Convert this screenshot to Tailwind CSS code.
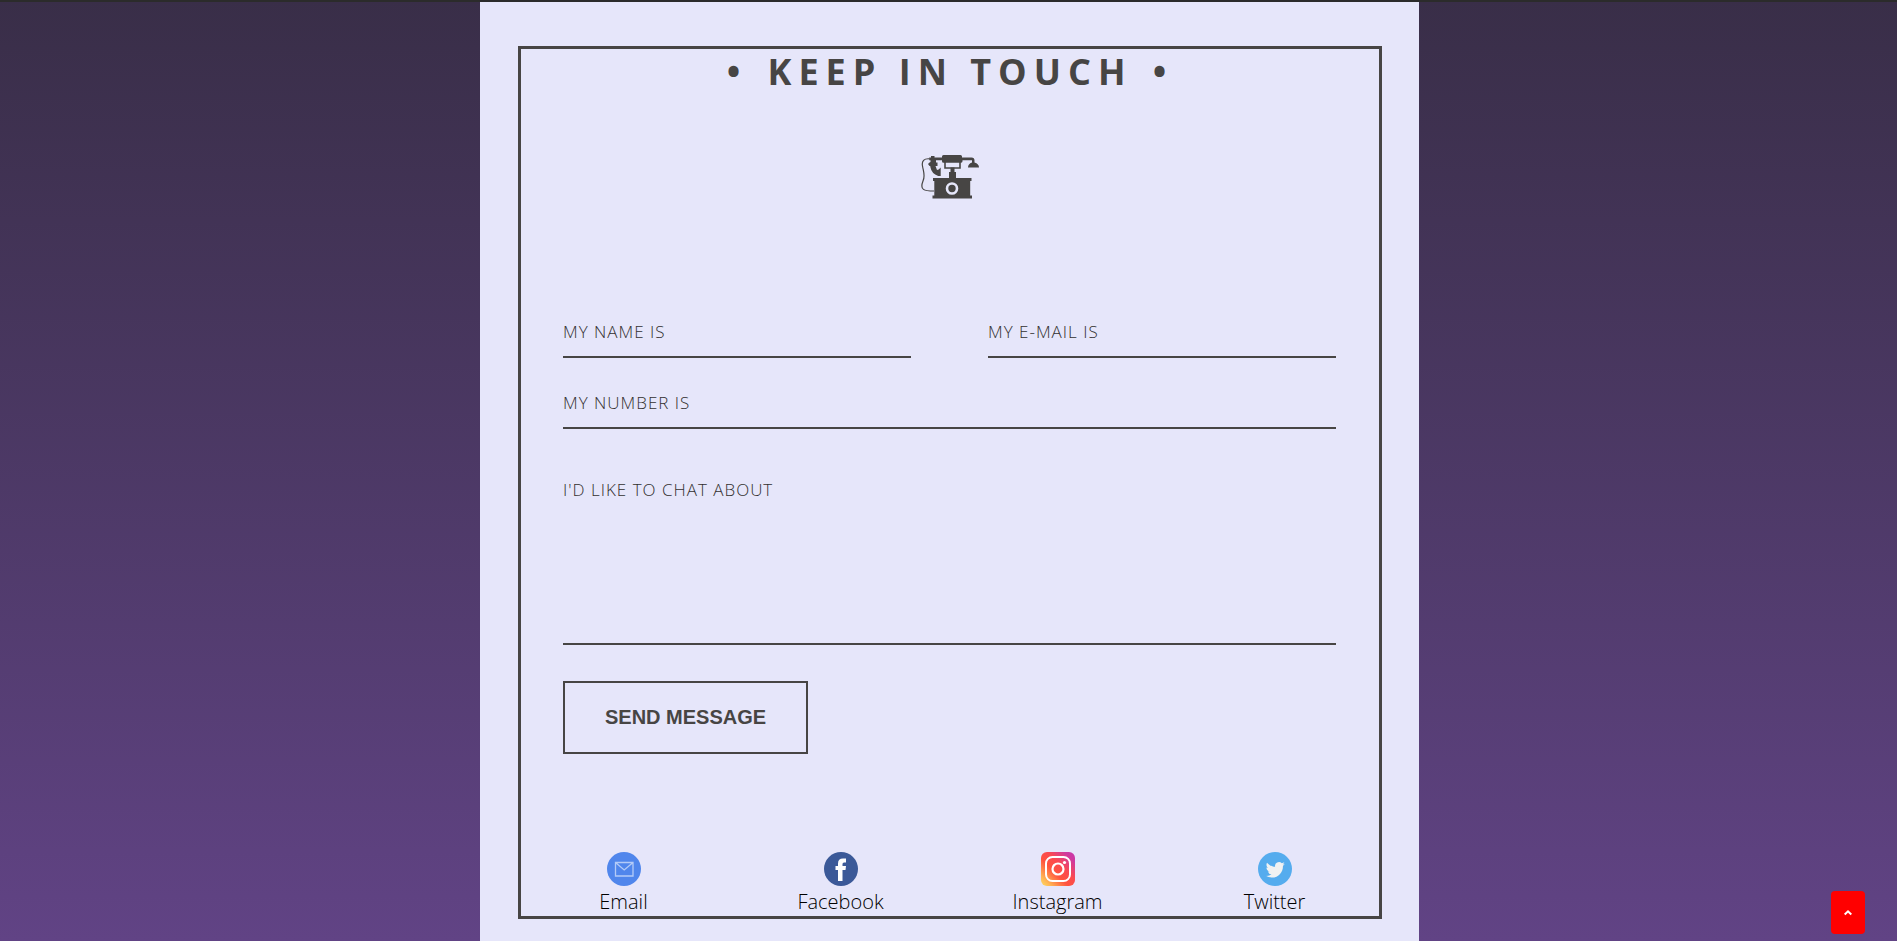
<!DOCTYPE html>
<html lang="en">
<head>
<meta charset="utf-8">
<meta name="viewport" content="width=device-width, initial-scale=1">
<title>Keep in touch</title>
<script src="https://cdn.jsdelivr.net/npm/@tailwindcss/browser@4"></script>
</head>
<body class="min-h-screen border-t-2 border-[#2b2b2b] bg-linear-to-b from-[#392e48] to-[#614385] pl-0.5 font-['Open_Sans','Noto_Sans',sans-serif] text-[#474544] flex flex-col">
<main class="mx-auto w-full max-w-[939px] grow bg-[#e6e6fa] pt-11 pb-5 pl-[38px] pr-[37px]">
  <section class="border-3 border-[#474544]">
    <h1 class="text-center text-4xl leading-[46px] font-bold tracking-[7px]"><span class="mr-1">•</span> KEEP IN TOUCH <span class="ml-1">•</span></h1>
    <svg class="mx-auto mt-[60px] block h-11 w-[60px]" viewBox="0 0 60 44" fill="#474544" aria-hidden="true">
      <path d="M9.500 3.800C4 3.300 1.500 6 2.500 11C3.500 17 5.500 21 3 26C-.5 35 4 36 14 36" fill="none" stroke="#474544" stroke-width="1.200"/>
      <path d="M11 1h3.500v1.500H22V1.500Q22 0 23.500 0h17Q42 0 42 1.500v1h9.500q3 0 3 3v2q4.500 1.300 4.500 5H48q0-3.700 4-5V5.200H42.500v1q0 1.500-2 1.500h-17Q22 7.700 22 6.200v-1h-6v2.300h1.500V11H15.500l1.500 4q1.500 0 3.700-2.500v8.500h-2.500Q11.500 18.500 10.500 12.500L10.200 11H9.500L8 9l1.500-1.500L10.500 7V5.200H9.200V2.500H11z"/>
      <path d="M25 7v6h15V7" fill="none" stroke="#474544" stroke-width="1.600"/>
      <path d="M30.500 12.500h4V17h1.500v6H51.500v3h-1.300v14.500H52V43.500H12.500v-3h1.800V26H13v-3h16v-6h1.500z"/>
      <circle cx="32" cy="33.500" r="5" fill="#474544" stroke="#e6e6fa" stroke-width="2.600"/>
    </svg>
    <form class="mt-[105px] mr-[43px] ml-[42px]">
      <div class="grid grid-cols-2 gap-x-[77px] gap-y-[17px]">
        <input type="text" aria-label="My name is" placeholder="MY NAME IS" class="h-[54px] min-w-0 border-b-2 border-[#474544] bg-transparent pt-0.5 text-[17px] leading-6 font-light tracking-[1px] outline-none placeholder:text-[#33302f]">
        <input type="email" aria-label="My e-mail is" placeholder="MY E-MAIL IS" class="h-[54px] min-w-0 border-b-2 border-[#474544] bg-transparent pt-0.5 text-[17px] leading-6 font-light tracking-[1px] outline-none placeholder:text-[#33302f]">
        <input type="tel" aria-label="My number is" placeholder="MY NUMBER IS" class="col-span-2 h-[54px] min-w-0 border-b-2 border-[#474544] bg-transparent pt-0.5 text-[17px] leading-6 font-light tracking-[1px] outline-none placeholder:text-[#33302f]">
        <textarea aria-label="I'd like to chat about" placeholder="I'D LIKE TO CHAT ABOUT" class="col-span-2 block h-[199px] resize-none border-b-2 border-[#474544] bg-transparent pt-8 text-[17px] leading-6 font-light tracking-[1px] outline-none placeholder:text-[#33302f]"></textarea>
      </div>
      <button type="submit" class="mt-9 block h-[73px] border-2 border-[#474544] px-10 pb-0.5 font-['Liberation_Sans',Arial,sans-serif] text-xl font-bold">SEND MESSAGE</button>
    </form>
    <nav aria-label="Social links" class="-mr-1 -ml-1.5 mt-[98px] grid grid-cols-4 text-xl leading-8 font-light text-black">
      <a href="#email" class="-mb-0.5 flex flex-col items-center">
        <svg class="size-[34px]" viewBox="0 0 34 34" aria-hidden="true"><circle cx="17" cy="17" r="17" fill="#5086ec"/><path d="M8.500 10.500h17.500v13.500H8.500zL17.200 18L26 10.500" fill="none" stroke="#b4cbf7" stroke-width="1.300"/></svg>
        Email</a>
      <a href="#facebook" class="-mb-0.5 flex flex-col items-center">
        <svg class="size-[34px]" viewBox="0 0 34 34" aria-hidden="true"><circle cx="17" cy="17" r="17" fill="#3b5998"/><path d="M14 29V18h-2.500v-4H14v-2.500Q14 6.500 19 6.500h3v4h-2Q18.500 10.500 18.500 12v2H22l-.5 4h-3v11z" fill="#fff"/></svg>
        Facebook</a>
      <a href="#instagram" class="-mb-0.5 flex flex-col items-center">
        <svg class="size-[34px]" viewBox="0 0 34 34" aria-hidden="true"><defs><linearGradient id="ig" x1="0" y1="1" x2="1" y2="0"><stop offset="0" stop-color="#ffdc60"/><stop offset=".15" stop-color="#ffb554"/><stop offset=".4" stop-color="#ff543e"/><stop offset=".6" stop-color="#fb4a50"/><stop offset=".85" stop-color="#cf39a0"/><stop offset="1" stop-color="#c837ab"/></linearGradient></defs><rect width="34" height="34" rx="6" fill="url(#ig)"/><rect x="5" y="5" width="24" height="24" rx="6.500" fill="none" stroke="#fff" stroke-width="2"/><circle cx="17" cy="17" r="5.500" fill="none" stroke="#fff" stroke-width="2.200"/><circle cx="23.500" cy="10.500" r="1.600" fill="#fff"/></svg>
        Instagram</a>
      <a href="#twitter" class="-mb-0.5 flex flex-col items-center">
        <svg class="size-[34px]" viewBox="0 0 34 34" aria-hidden="true"><circle cx="17" cy="17" r="17" fill="#55acee"/><path transform="translate(7.700 8.200) scale(.8)" d="M23.950 4.570a10 10 0 0 1-2.820.780 4.960 4.960 0 0 0 2.160-2.730c-.950.560-2 .960-3.130 1.190a4.920 4.920 0 0 0-8.380 4.480C7.690 8.100 4.070 6.130 1.640 3.160a4.820 4.820 0 0 0-.670 2.480c0 1.710.870 3.210 2.190 4.100a4.900 4.900 0 0 1-2.230-.620v.060a4.920 4.920 0 0 0 3.950 4.830 5 5 0 0 1-2.210.080 4.940 4.940 0 0 0 4.600 3.420A9.870 9.870 0 0 1 0 19.540a14 14 0 0 0 7.550 2.210c9.050 0 14-7.500 14-13.980 0-.210 0-.420-.020-.630a9.940 9.940 0 0 0 2.460-2.550z" fill="#f1f2f2"/></svg>
        Twitter</a>
    </nav>
  </section>
</main>
<button type="button" aria-label="Back to top" class="fixed right-8 bottom-[7px] flex h-[43px] w-[34px] items-center justify-center rounded bg-[#ff0000]">
  <svg class="h-2 w-2" viewBox="0 0 8 8" fill="none" stroke="#fff" stroke-width="2" aria-hidden="true"><path d="M.7 5.500L4 2.300L7.300 5.500"/></svg>
</button>
</body>
</html>
